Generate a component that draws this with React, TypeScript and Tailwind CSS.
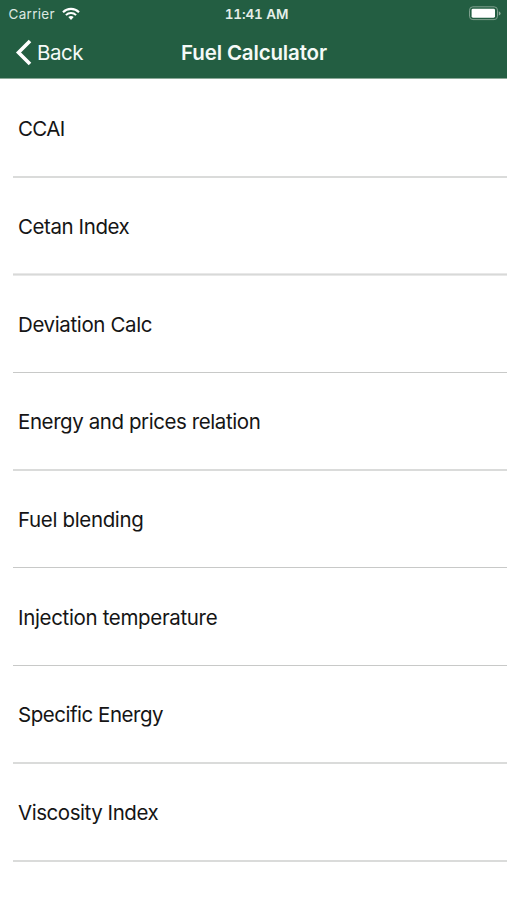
const rows = [
  { label: 'CCAI', height: 'h-[99px]', line: 'h-[2px] bg-[#dadbda]', text: 'pt-[4px] tracking-[-0.65px]' },
  { label: 'Cetan Index', height: 'h-[98px]', line: 'h-[3px] border-y border-[#e8e8e8] bg-[#d8d9d8]', text: 'pt-[3px] tracking-[-0.42px]' },
  { label: 'Deviation Calc', height: 'h-[97px]', line: 'h-px bg-[#c8c9c8]', text: 'pt-[2px] tracking-[-0.37px]' },
  { label: 'Energy and prices relation', height: 'h-[98px]', line: 'h-[2px] bg-[#dadbda]', text: 'pt-[2px] tracking-[-0.42px]' },
  { label: 'Fuel blending', height: 'h-[97px]', line: 'h-px bg-[#c8c9c8]', text: 'pt-[2px] tracking-[-0.35px]' },
  { label: 'Injection temperature', height: 'h-[98px]', line: 'h-px bg-[#c8c9c8]', text: 'pt-[3px] tracking-[-0.34px]' },
  { label: 'Specific Energy', height: 'h-[98px]', line: 'h-[2px] bg-[#dadbda]', text: 'pt-[3px] tracking-[-0.48px]' },
  { label: 'Viscosity Index', height: 'h-[98px]', line: 'h-[2px] bg-[#dadbda]', text: 'pt-[2px] tracking-[-0.45px]' },
];

function Wifi() {
  return (
    <svg className="ml-[7px] h-[14px] w-[18px]" viewBox="0 0 18 14" fill="none" stroke="#fff">
      <path d="M1 5.2C5.4.7 12.6.7 17 5.2" strokeWidth="2.1" />
      <path d="M3.9 8.1C6.7 5.3 11.3 5.3 14.1 8.1" strokeWidth="2" />
      <path d="M6.3 10.1Q9 7.9 11.7 10.1L9 12.9Z" fill="#fff" stroke="none" />
    </svg>
  );
}

function Battery() {
  return (
    <svg className="h-[15px] w-[33px]" viewBox="0 0 33 15">
      <rect x="1.5" y="0.8" width="28" height="12.8" rx="3.4" fill="none" stroke="#7fa08f" />
      <rect x="3.6" y="2.7" width="23.4" height="9" rx="1.4" fill="#fff" />
      <path d="M30.8 5.2Q32.6 6 32.6 7.4T30.8 9.6Z" fill="#8fac9d" />
    </svg>
  );
}

export default function App() {
  return (
    <div className="flex h-[900px] w-[507px] flex-col overflow-hidden bg-white font-['Inter','Liberation_Sans',sans-serif]">
      <header className="h-[79px] shrink-0 bg-[#235e42] text-[#f5faf7]">
        <div className="grid h-[27px] grid-cols-3 items-center">
          <div className="flex items-center pl-[8.5px] text-[13.5px] tracking-[0.3px] text-[#dce8e1]">
            <span className="pt-px">Carrier</span>
            <Wifi />
          </div>
          <div className="pl-[6px] pt-px text-center text-[13.5px] font-semibold tabular-nums tracking-[-0.1px] text-[#e6efe9]">11:41 AM</div>
          <div className="flex justify-end pr-[6px]">
            <Battery />
          </div>
        </div>
        <nav className="grid h-[51px] grid-cols-[1fr_auto_1fr] items-center">
          <button className="flex items-center pl-[14px] text-left text-[20.5px] tracking-[-0.5px]">
            <svg className="mr-[5px] h-[28px] w-[18px]" viewBox="0 0 18 28" fill="none" stroke="#fff" strokeWidth="3.6">
              <path d="M16 2L4.5 13.5L16 25" />
            </svg>
            <span className="pt-[2px]">Back</span>
          </button>
          <h1 className="pl-[1px] pt-[2px] text-[20.5px] font-semibold tracking-[-0.15px]">Fuel Calculator</h1>
        </nav>
        <div className="h-px bg-[#8aa897]" />
      </header>
      <main>
        {rows.map((row) => (
          <div key={row.label} className={`flex flex-col pl-[13px] ${row.height}`}>
            <div className={`flex flex-1 items-center pl-[5px] text-[20.5px] text-[#151515] ${row.text}`}>{row.label}</div>
            <div className={row.line} />
          </div>
        ))}
      </main>
    </div>
  );
}
